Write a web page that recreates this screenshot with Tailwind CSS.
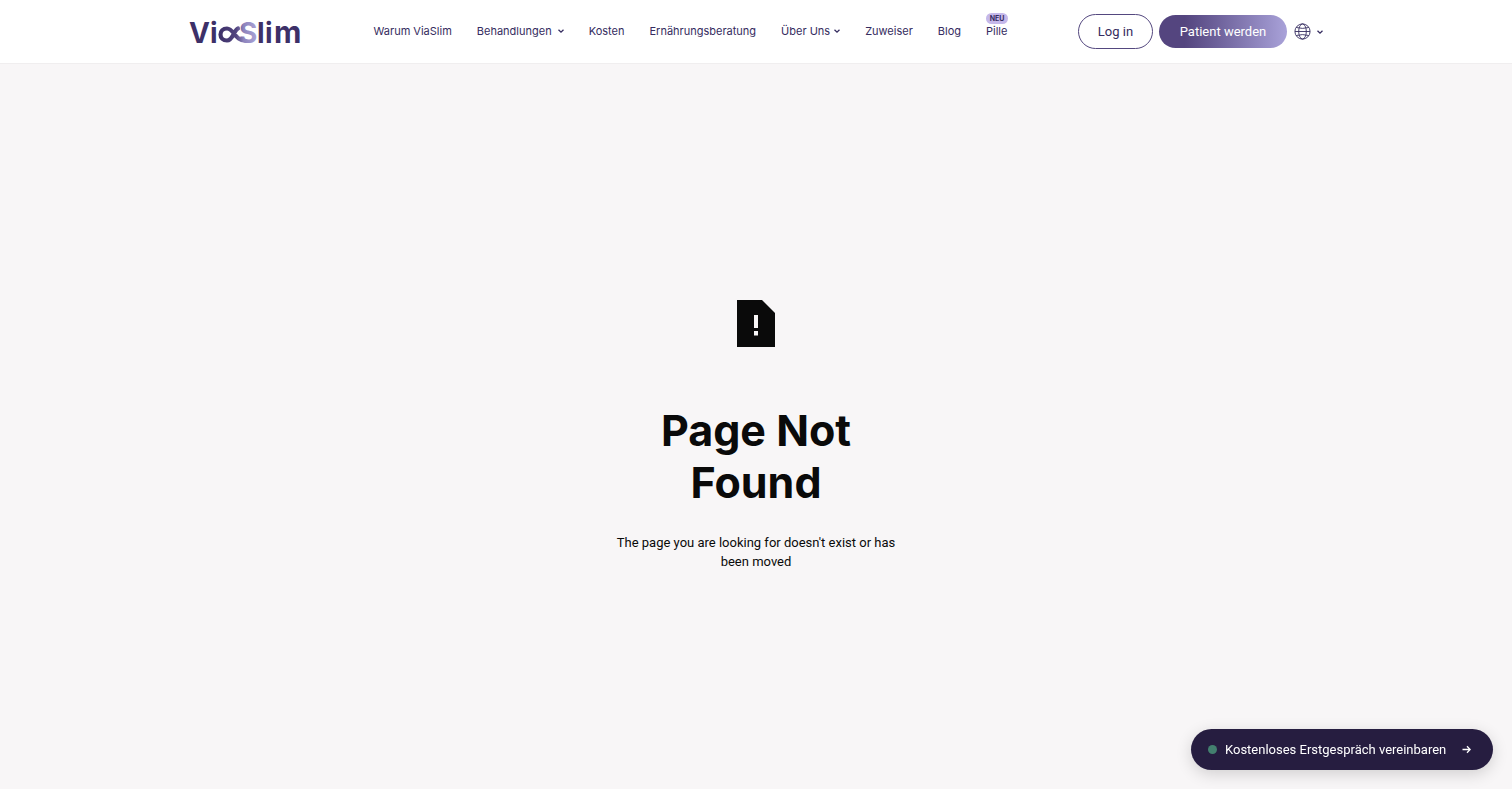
<!DOCTYPE html>
<html lang="de">
<head>
  <meta charset="UTF-8" />
  <meta name="viewport" content="width=device-width, initial-scale=1.0" />
  <title>Page Not Found | ViaSlim</title>
  <script src="https://cdn.jsdelivr.net/npm/@tailwindcss/browser@4"></script>
</head>
<body class="min-h-screen flex flex-col bg-[#f8f6f7] font-['Roboto',sans-serif] text-[#0a0a0a]">
  <!-- Header -->
  <header class="h-16 shrink-0 bg-white border-b border-[#f0eeef] px-[12.5%] flex items-center justify-between whitespace-nowrap text-[#352c60]">
    <a href="#" aria-label="ViaSlim">
      <svg class="block w-[114px] h-9 overflow-visible" viewBox="0 0 114 36" fill="none">
        <defs>
          <linearGradient id="ribbon" gradientUnits="userSpaceOnUse" x1="30" y1="0" x2="68" y2="0">
            <stop offset="0" stop-color="#3d3068" />
            <stop offset="0.45" stop-color="#51447f" />
            <stop offset="0.65" stop-color="#8d84bd" />
            <stop offset="1" stop-color="#aaa3d6" />
          </linearGradient>
        </defs>
        <g class="font-['Inter',sans-serif] text-[28px] font-bold" fill="#3d3068">
          <text x="0" y="29">V</text>
          <text x="21" y="29">i</text>
          <text x="50" y="29" fill="url(#ribbon)">S</text>
          <text x="68" y="29">l</text>
          <text x="76" y="29">i</text>
          <text class="text-[30px]" x="85" y="29">m</text>
        </g>
        <path d="M49 14.500C45 16 44 26.500 38 26.500C34 26.500 31.500 24 31.500 20.500C31.500 17 34 14.500 38 14.500C45 14.500 46 27 57 27" stroke="url(#ribbon)" stroke-width="4.200" stroke-linecap="round" />
      </svg>
    </a>

    <nav class="flex items-center gap-[25px] pb-0.5 font-['Inter',sans-serif] text-[11px] leading-4">
      <a href="#">Warum ViaSlim</a>
      <button type="button" class="flex items-center gap-1.5">Behandlungen
        <svg class="size-[6px]" viewBox="0 0 6 6" fill="none" stroke="currentColor" stroke-width="1.3"><path d="M.5 1.8L3 4.2L5.500 1.8" /></svg>
      </button>
      <a href="#">Kosten</a>
      <a href="#">Ernährungsberatung</a>
      <button type="button" class="flex items-center gap-1">Über Uns
        <svg class="size-[6px]" viewBox="0 0 6 6" fill="none" stroke="currentColor" stroke-width="1.3"><path d="M.5 1.8L3 4.2L5.500 1.8" /></svg>
      </button>
      <a href="#">Zuweiser</a>
      <a href="#">Blog</a>
      <a href="#" class="relative">Pille
        <span class="absolute -top-[10px] left-0 h-[11px] w-[22px] text-center rounded-full bg-[#c5b8ea] text-[7px] leading-[11px] font-bold">NEU</span>
      </a>
    </nav>

    <div class="flex items-center gap-1.5 text-[13px]">
      <a href="#" class="h-[35px] w-[75px] flex items-center justify-center rounded-full border border-[#54487f]">Log in</a>
      <a href="#" class="h-[33px] w-[128px] flex items-center justify-center rounded-full bg-linear-to-r from-[#54457f] from-20% to-[#a9a2d9] text-white">Patient werden</a>
      <button type="button" aria-label="Sprache" class="flex items-center gap-1.5 pl-px">
        <svg class="size-[17px]" viewBox="0 0 17 17" fill="none" stroke="currentColor" stroke-width="0.9">
          <circle cx="8.500" cy="8.500" r="7.600" />
          <ellipse cx="8.500" cy="8.500" rx="3.800" ry="7.600" />
          <path d="M1 8.500H16M2.200 4.500Q8.500 6.300 14.800 4.500M2.200 12.500Q8.500 10.700 14.800 12.500" />
        </svg>
        <svg class="size-[6px]" viewBox="0 0 6 6" fill="none" stroke="currentColor" stroke-width="1.3"><path d="M.5 1.8L3 4.2L5.500 1.8" /></svg>
      </button>
    </div>
  </header>

  <!-- 404 message -->
  <main class="flex-1 flex flex-col items-center justify-center pt-[18px] text-center">
    <svg class="w-[38px] h-[47px]" viewBox="0 0 38 47">
      <path d="M0 0H25L38 13V47H0Z" fill="#0a0a0a" />
      <path d="M17 15H21V28H17ZM17 31H21V35.500H17Z" fill="#f8f6f7" />
    </svg>
    <h1 class="mt-[57px] w-[280px] font-['Inter',sans-serif] text-[43px] leading-[52px] font-bold">Page Not Found</h1>
    <p class="mt-[25px] w-[300px] text-[13px] leading-[19px]">The page you are looking for doesn't exist or has been moved</p>
  </main>

  <!-- Booking button -->
  <a href="#" class="fixed bottom-[19px] right-[19px] h-[41px] w-[302px] px-[17px] flex items-center rounded-full bg-[#261d40] text-white text-[13px] whitespace-nowrap shadow-[0_4px_16px_rgba(0,0,0,0.16)]">
    <span class="size-[9px] shrink-0 rounded-full bg-[#43806f] mr-2"></span>
    Kostenloses Erstgespräch vereinbaren
    <svg class="size-[9px] shrink-0 ml-4" viewBox="0 0 9 9" fill="none" stroke="currentColor" stroke-width="1.3"><path d="M.5 4.500H8M5 1.200L8.200 4.500L5 7.800" /></svg>
  </a>
</body>
</html>
